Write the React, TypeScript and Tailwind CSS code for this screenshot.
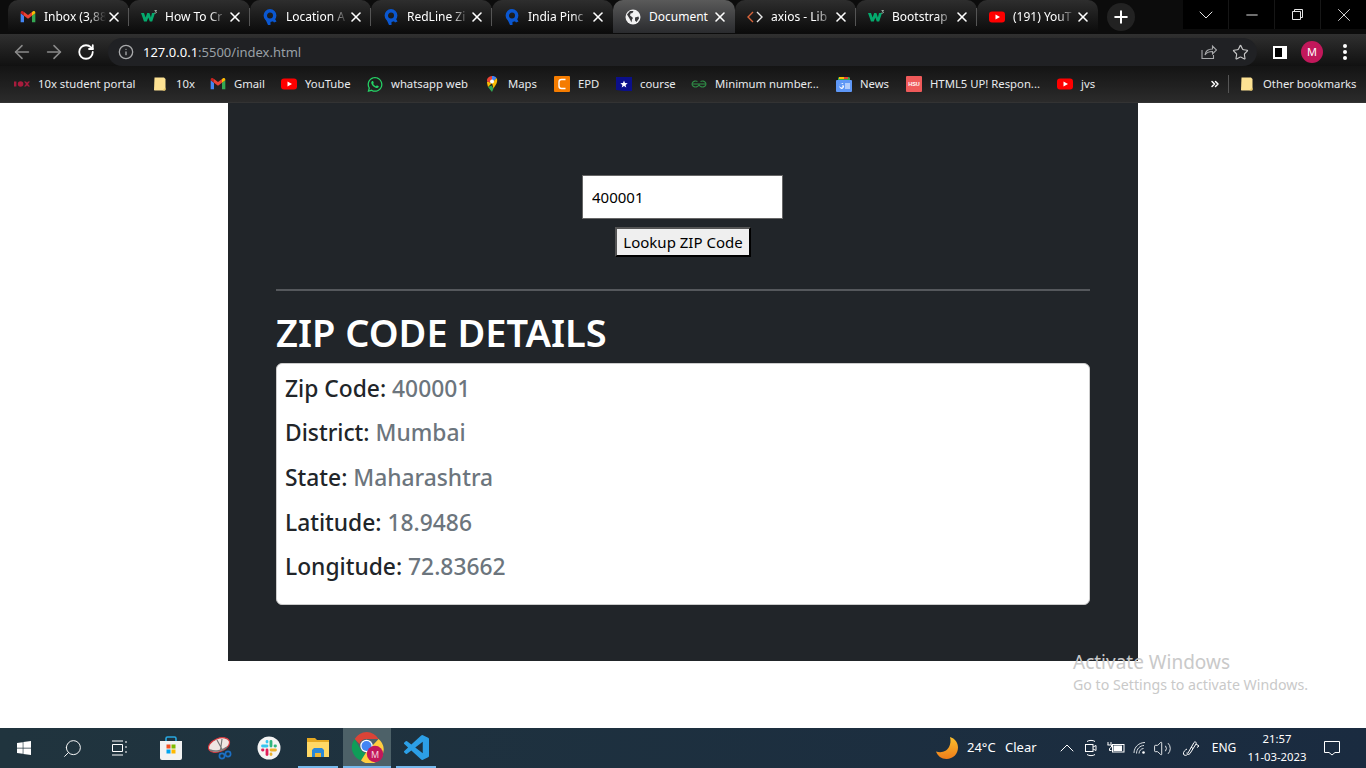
import React from 'react';
import { ArrowLeft, ArrowRight, RotateCw, Info, Star, X, Plus, ChevronDown, ChevronUp, ChevronsRight, Minus, Search, Volume2 } from 'lucide-react';
import { FaWindows, FaWhatsapp } from 'react-icons/fa';

const Gmail = ({ size = 16 }: { size?: number }) => (
  <svg width={size} height={size} viewBox="0 0 24 24">
    <path fill="#4285F4" d="M1 20h5V10L1 6.500z" />
    <path fill="#34A853" d="M18 20h5V6.500L18 10z" />
    <path fill="#EA4335" d="M6 10V4.500l6 4.500 6-4.500V10l-6 4.500z" />
    <path fill="#FBBC04" d="M18 4.500l1.500-1C21 2.500 23 3.500 23 5.500v1L18 10z" />
    <path fill="#C5221F" d="M6 4.500l-1.500-1C3 2.500 1 3.500 1 5.500v1L6 10z" />
  </svg>
);

const W3 = () => (
  <svg width="16" height="16" viewBox="0 0 16 16">
    <path fill="#04AA6D" d="M0 4h3l1.600 4.500L6.200 4h2.200l1.500 4.500L11 4h3l-2.800 8.500H8.800L7.300 8.500l-1.500 4H3z" />
    <path fill="none" stroke="#cfe8dc" strokeWidth="0.700" d="M13.500 1.500h2l-1 1c.8 0 1 .5 1 .8 0 .5-.8 1-2 .7" />
  </svg>
);

const RedLine = () => (
  <svg width="16" height="16" viewBox="0 0 16 16">
    <circle cx="8" cy="6.500" r="4.700" fill="none" stroke="#0b57d0" strokeWidth="3.400" />
    <path fill="#0b57d0" d="M3.500 10.500l2.500 5.500h2.500L8.500 12zM9.500 10.500l2.500 3 2.500-1L12.500 9z" />
  </svg>
);

const Globe = () => (
  <svg width="16" height="16" viewBox="0 0 16 16">
    <circle cx="8" cy="8" r="7.500" fill="#f1f1f1" />
    <path fill="#3a3a3c" d="M2 5.500l3-3.500h3.500l-1 2-2 .5L5 6.500l2 1.500 1 1-1 1.500-.5 3L4.500 9.500zM10 8.500l3.500-1 .5 2-2.500 3.500-1.500-1.500z" />
  </svg>
);

const CodeTag = () => (
  <svg width="16" height="16" viewBox="0 0 16 16" fill="none" strokeWidth="1.400">
    <path d="M6 3L1 8l5 5" stroke="#d9653b" />
    <path d="M10 3l5 5-5 5" stroke="#e8e8e8" />
  </svg>
);

const YouTube = () => (
  <svg width="16" height="16" viewBox="0 0 16 16">
    <rect x="0" y="2.500" width="16" height="11" rx="3" fill="#ff0000" />
    <path d="M6.500 5.500v5L11 8z" fill="#fff" />
  </svg>
);

const Folder = () => (
  <svg width="16" height="16" viewBox="0 0 16 16">
    <path fill="#fde293" d="M2.500 1.500h9.500l1.500 1.500v10.500l-.5 1h-10.500l-.5-.5z" />
    <path fill="#e8c766" d="M10.500 14.500l3-3v2.500l-.5.500z" />
  </svg>
);

const Maps = () => (
  <svg width="16" height="16" viewBox="0 0 16 16">
    <path fill="#34a853" d="M4 11l4 5 1.500-3.500-2-3z" />
    <path fill="#fbbc04" d="M3 5.500c0 2 .5 3.500 1 5.500l4-4z" />
    <path fill="#4285f4" d="M8 0c2 0 3.500.500 4.500 2L8 7z" />
    <path fill="#ea4335" d="M3.500 2.500C2.800 3.300 3 4.500 3 5.500l5 1.500V0C6 0 4.500 1 3.500 2.500z" />
    <path fill="#fbbc04" d="M12.500 2c1 1.500.8 3.500 0 5.500L9.500 12.500 8 7z" />
    <circle cx="8" cy="5.500" r="2" fill="#fff" />
  </svg>
);

const Epd = () => (
  <svg width="16" height="16" viewBox="0 0 16 16">
    <rect width="16" height="16" rx="1" fill="#f57c00" />
    <path d="M11.500 3.500H7.500a2.500 2.500 0 0 0-2.500 2.500v4a2.500 2.500 0 0 0 2.500 2.500h4" fill="none" stroke="#fff" strokeWidth="1.400" />
  </svg>
);

const Course = () => (
  <svg width="16" height="16" viewBox="0 0 16 16">
    <path fill="#0b0f8a" d="M0 1h16v14H8l-8-1z" />
    <path fill="#fff" d="M8 4.500l1 2.500 2.700.200-2.100 1.700.700 2.600L8 10l-2.300 1.500.700-2.600-2.100-1.700L7 7z" />
  </svg>
);

const Gfg = () => (
  <svg width="16" height="16" viewBox="0 0 16 16" fill="none" stroke="#2f8d46" strokeWidth="1.100">
    <path d="M1 8h14" />
    <path d="M8 8.500A3.500 3 0 1 1 6.500 5.500" />
    <path d="M8 8.500A3.500 3 0 1 0 9.500 5.500" />
  </svg>
);

const GNews = () => (
  <svg width="16" height="16" viewBox="0 0 16 16">
    <path fill="#34a853" d="M2 2l1-1h10l1 1v3H2z" />
    <path fill="#fbbc04" d="M3 1h5v2H3z" />
    <path fill="#ea4335" d="M8 1h4v2H8z" />
    <rect y="4" width="16" height="12" rx="1" fill="#5e97f6" />
    <path fill="#fff" d="M9 7.500h5v1H9zM9 9.500h5v1H9zM9 11.500h5v1H9zM6 9.500v1h1c-.2.700-.8 1-1.500 1a2 2 0 1 1 1.200-3.600l.8-.7A3 3 0 1 0 5.500 13c1.700 0 2.600-1.300 2.500-3.500z" />
  </svg>
);

const Hsu = () => (
  <svg width="16" height="16" viewBox="0 0 16 16">
    <rect width="16" height="16" rx="1" fill="#ef5a5a" />
    <text x="8" y="10" fontSize="5.500" fontWeight="700" fill="#fff" textAnchor="middle" fontFamily="Liberation Sans, sans-serif">HSU</text>
  </svg>
);

const TenX = () => (
  <svg width="16" height="16" viewBox="0 0 16 16" fill="#a81c3d">
    <rect x="0" y="5.500" width="2.400" height="5" />
    <circle cx="6.600" cy="8" r="2.800" />
    <path d="M10 5.500h2l1 1.300 1-1.300h2L14 8l2 2.500h-2l-1-1.300-1 1.300h-2L12 8z" />
  </svg>
);

const Store = () => (
  <svg width="24" height="26" viewBox="0 0 24 26">
    <path d="M7 7V3.500a1.500 1.500 0 0 1 1.500-1.500h7A1.500 1.500 0 0 1 17 3.500V7" fill="none" stroke="#29a8e0" strokeWidth="1.600" />
    <path d="M1 6h22v17a2 2 0 0 1-2 2H3a2 2 0 0 1-2-2z" fill="#f2f2f2" />
    <rect x="7.500" y="9.500" width="4" height="4" fill="#f25022" />
    <rect x="12.500" y="9.500" width="4" height="4" fill="#7fba00" />
    <rect x="7.500" y="14.500" width="4" height="4" fill="#00a4ef" />
    <rect x="12.500" y="14.500" width="4" height="4" fill="#ffb900" />
  </svg>
);

const Snip = () => (
  <svg width="26" height="24" viewBox="0 0 26 24">
    <ellipse cx="11" cy="9" rx="11" ry="6.500" transform="rotate(-22 11 9)" fill="#efe6e2" stroke="#d7393f" strokeWidth="1.200" />
    <path d="M2 14c5 2 12 1 17-3" stroke="#777" strokeWidth="1.500" fill="none" />
    <path d="M9 4l6 11M14 3l-1.500 11" stroke="#777" strokeWidth="1.200" />
    <circle cx="20" cy="18" r="2.600" fill="none" stroke="#1c6fc4" strokeWidth="1.700" />
    <circle cx="14" cy="20" r="2.600" fill="none" stroke="#1c6fc4" strokeWidth="1.700" />
  </svg>
);

const Slack = () => (
  <svg width="24" height="24" viewBox="0 0 24 24">
    <circle cx="12" cy="12" r="11.500" fill="#f4f4f4" />
    <g strokeWidth="2.800" strokeLinecap="round">
      <path d="M10 5.500v.5" stroke="#36c5f0" />
      <path d="M5.500 10h4.500" stroke="#36c5f0" />
      <path d="M18.500 10H18" stroke="#2eb67d" />
      <path d="M14 5.500V10" stroke="#2eb67d" />
      <path d="M14 18.500V18" stroke="#ecb22e" />
      <path d="M14 14h4.500" stroke="#ecb22e" />
      <path d="M5.500 14H6" stroke="#e01e5a" />
      <path d="M10 14v4.500" stroke="#e01e5a" />
    </g>
  </svg>
);

const Explorer = () => (
  <svg width="22" height="20" viewBox="0 0 22 20">
    <path fill="#e6a922" d="M0 1h8l2 2h12v4H0z" />
    <path fill="#ffd866" d="M0 5h22v15H0z" />
    <path fill="#2b88d8" d="M5 20v-7l2-2h8l2 2v7h-3v-4H8v4z" />
    <path fill="#f2b632" d="M8 16h6v4H8z" />
  </svg>
);

const Chrome = () => (
  <svg width="34" height="32" viewBox="0 0 34 32">
    <path fill="#db4437" d="M4.700 8A13.800 13.800 0 0 1 28.600 8H16.500a7.500 7.500 0 0 0-7 5z" />
    <path fill="#0f9d58" d="M4.700 8l6 10.500a7 7 0 0 0 5 3.800L11 29.500A13.800 13.800 0 0 1 4.700 8z" />
    <path fill="#ffcd40" d="M28.600 8A13.800 13.800 0 0 1 11 29.500l5-8z" />
    <circle cx="16.500" cy="15" r="6.200" fill="#fff" />
    <circle cx="16.500" cy="15" r="5" fill="#4285f4" />
    <circle cx="25" cy="23" r="8.200" fill="#c2185b" />
    <text x="25" y="26.500" fontSize="9" fill="#f3d2de" textAnchor="middle" fontFamily="Noto Sans, sans-serif">M</text>
  </svg>
);

const VsCode = () => (
  <svg width="25" height="25" viewBox="0 0 24 24">
    <path fill="#2c9fe6" d="M23.150 2.587L18.210.21a1.494 1.494 0 0 0-1.705.29l-9.460 8.630-4.120-3.128a.999.999 0 0 0-1.276.057L.327 7.261A1 1 0 0 0 .326 8.740L3.899 12 .326 15.260a1 1 0 0 0 .001 1.479L1.650 17.940a.999.999 0 0 0 1.276.057l4.120-3.128 9.460 8.630a1.492 1.492 0 0 0 1.704.29l4.942-2.377A1.500 1.500 0 0 0 24 20.060V3.939a1.500 1.500 0 0 0-.85-1.352zm-5.146 14.861L10.826 12l7.178-5.448v10.896z" />
  </svg>
);

const Moon = () => (
  <svg width="24" height="24" viewBox="0 0 24 24">
    <defs>
      <linearGradient id="moonFill" x1="0" y1="0" x2="0" y2="1">
        <stop offset="0" stopColor="#fbc02d" />
        <stop offset="1" stopColor="#ef7d1a" />
      </linearGradient>
    </defs>
    <path fill="url(#moonFill)" d="M15 1c5 1.500 8 5.500 8 10.500C23 18 18 23 11.500 23 6.500 23 2.500 20 1 15.500c6 2 11-.5 13-4.500 1.500-3 2-6.500 1-10z" />
  </svg>
);

const Meet = () => (
  <svg width="14" height="18" viewBox="0 0 14 18" fill="none" stroke="#fff" strokeWidth="1">
    <path d="M3 2.500c2-1.500 6-1.500 8 0M3 15.500c2 1.500 6 1.500 8 0" />
    <rect x="1.500" y="5.500" width="7.500" height="7" />
    <path d="M9 8l3-1.500v5L9 10" />
  </svg>
);

const Battery = () => (
  <svg width="18" height="14" viewBox="0 0 18 14" fill="none" stroke="#fff" strokeWidth="1">
    <path d="M1 1v3M4 1v3M.500 4h4v2l-2 1.500v2h2" />
    <rect x="5.500" y="3.500" width="11.500" height="7.500" />
    <rect x="6.500" y="4.500" width="8.500" height="5.500" fill="#fff" stroke="none" />
  </svg>
);

const Wifi = () => (
  <svg width="14" height="14" viewBox="0 0 14 14" fill="none" stroke="#d8dde2" strokeWidth="1">
    <path d="M1 12C1 6 6 1.500 12 1.500" />
    <path d="M3.500 12.500C3.500 8 7 4.500 11 4.500" />
    <path d="M6 12.500C6 10 8 7.500 10.500 7.500" />
    <circle cx="10.500" cy="11.500" r="1.300" fill="#fff" stroke="none" />
  </svg>
);

const Pen = () => (
  <svg width="18" height="18" viewBox="0 0 18 18" fill="none" stroke="#fff" strokeWidth="1">
    <path d="M6 14L12 3.500c1-1.500 3 0 2 1.500L8 14.500c-1 1.500-3.500 1-3-1" />
    <path d="M14 5l3 2-2 1.500M5 10c-2 1-4 3-3.500 5s3 1.500 4 .5M9 8l2 1.500" />
  </svg>
);

const ActionCenter = () => (
  <svg width="16" height="16" viewBox="0 0 16 16" fill="none" stroke="#fff" strokeWidth="1">
    <path d="M.500 1.500h15v11H11L8 15l-3-2.500H.500z" />
  </svg>
);

const Share = () => (
  <svg width="16" height="16" viewBox="0 0 16 16" fill="none" stroke="#a8a9ab" strokeWidth="1.100">
    <path d="M1 6v8.500h11.500V11" />
    <path d="M4 11c.5-4 3.500-6 7.500-6V2L15.500 6l-4 4V7.500C8.500 7.500 5.500 8.500 4 11z" />
  </svg>
);

const tabs = [
  { label: 'Inbox (3,88', icon: <Gmail />, width: 'w-[121px]', sep: true },
  { label: 'How To Cr', icon: <W3 />, width: 'w-[121px]', sep: true },
  { label: 'Location A', icon: <RedLine />, width: 'w-[121px]', sep: true },
  { label: 'RedLine Zi', icon: <RedLine />, width: 'w-[121px]', sep: true },
  { label: 'India Pinc', icon: <RedLine />, width: 'w-[121px]' },
  { label: 'Document', icon: <Globe />, width: 'w-[122px]', active: true },
  { label: 'axios - Lib', icon: <CodeTag />, width: 'w-[121px]', sep: true },
  { label: 'Bootstrap', icon: <W3 />, width: 'w-[121px]', sep: true },
  { label: '(191) YouT', icon: <YouTube />, width: 'w-[121px]' },
];

const bookmarks = [
  { label: '10x student portal', icon: <TenX />, width: 'w-[138px]' },
  { label: '10x', icon: <Folder />, width: 'w-[58px]' },
  { label: 'Gmail', icon: <Gmail />, width: 'w-[71px]' },
  { label: 'YouTube', icon: <YouTube />, width: 'w-[86px]' },
  { label: 'whatsapp web', icon: <FaWhatsapp size={17} className="text-[#25d366]" />, width: 'w-[117px]' },
  { label: 'Maps', icon: <Maps />, width: 'w-[70px]' },
  { label: 'EPD', icon: <Epd />, width: 'w-[62px]' },
  { label: 'course', icon: <Course />, width: 'w-[75px]' },
  { label: 'Minimum number...', icon: <Gfg />, width: 'w-[145px]' },
  { label: 'News', icon: <GNews />, width: 'w-[70px]' },
  { label: 'HTML5 UP! Respon...', icon: <Hsu />, width: 'w-[151px]' },
  { label: 'jvs', icon: <YouTube />, width: 'w-[40px]' },
];

const details = [
  { label: 'Zip Code:', value: '400001' },
  { label: 'District:', value: 'Mumbai' },
  { label: 'State:', value: 'Maharashtra' },
  { label: 'Latitude:', value: '18.9486' },
  { label: 'Longitude:', value: '72.83662' },
];

const Tab = ({ label, icon, width, active, sep }: { label: string; icon: React.ReactNode; width: string; active?: boolean; sep?: boolean }) => (
  <div
    className={`${width} h-[33px] shrink-0 flex items-center pl-3 rounded-t-[10px] ${
      active ? 'bg-gradient-to-b from-[#5a5a5a] to-[#2a2b2e]' : 'bg-gradient-to-b from-[#2e2e2e] to-[#0b0b0b]'
    }`}
  >
    <span className="w-4 shrink-0 flex justify-center">{icon}</span>
    <span
      className={`ml-2 w-[62px] whitespace-nowrap text-xs text-white ${
        active ? '' : '[mask-image:linear-gradient(to_right,black_72%,transparent)]'
      }`}
    >
      {label}
    </span>
    <X size={16} strokeWidth={2.4} className="ml-auto text-white" />
    <div className={`ml-[6px] w-px h-[18px] ${sep ? 'bg-[#555]' : 'bg-transparent'}`} />
  </div>
);

const TrayCell = ({ width, children }: { width: string; children: React.ReactNode }) => (
  <div className={`${width} h-full shrink-0 flex items-center justify-center`}>{children}</div>
);

export default function App() {
  return (
    <div className="w-[1366px] h-[768px] overflow-hidden flex flex-col font-['Noto_Sans',sans-serif]">
      {/* tab strip */}
      <div className="h-[34px] shrink-0 flex items-start bg-[#0c0c0c] pl-2">
        {tabs.map((t) => (
          <Tab key={t.label} {...t} />
        ))}
        <div className="ml-[9px] mt-[3px] w-7 h-7 rounded-full bg-[#222] flex items-center justify-center">
          <Plus size={20} strokeWidth={2.4} className="text-white" />
        </div>
        <div className="ml-auto w-[183px] h-[29px] bg-black flex text-[#e4e4e4]">
          <div className="flex-1 flex items-center justify-center border-r border-[#161616]"><ChevronDown size={24} strokeWidth={1} /></div>
          <div className="flex-1 flex items-center justify-center border-r border-[#161616]"><Minus size={18} strokeWidth={1.300} /></div>
          <div className="flex-1 flex items-center justify-center border-r border-[#161616]">
            <svg width="11" height="11" viewBox="0 0 11 11" fill="none" stroke="#e4e4e4"><path d="M.500 2.500h8v8h-8zM2.500 2.500v-2h8v8h-2" /></svg>
          </div>
          <div className="flex-1 flex items-center justify-center"><X size={22} strokeWidth={1} /></div>
        </div>
      </div>

      {/* toolbar */}
      <div className="h-[32px] shrink-0 flex items-center bg-gradient-to-b from-[#303030] to-[#111] pl-[11px] pt-[4px]">
        <ArrowLeft size={22} strokeWidth={1.700} className="text-[#8a8a8a]" />
        <ArrowRight size={22} strokeWidth={1.700} className="ml-[10px] text-[#8a8a8a]" />
        <RotateCw size={18} strokeWidth={2.4} className="ml-[12px] text-white" />
        <div className="ml-[13px] w-[1149px] h-[28px] rounded-full bg-[#202124] flex items-center pl-[10px] pr-[8px]">
          <Info size={16} className="text-[#a8a9ab]" />
          <span className="ml-[9px] mt-[1px] text-[13px] text-white">
            127.0.0.1<span className="text-[#9aa0a6]">:5500/index.html</span>
          </span>
          <span className="ml-auto"><Share /></span>
          <Star size={17} strokeWidth={1.600} className="ml-[15px] text-[#c8c8c8]" />
        </div>
        <div className="ml-[16px] w-[14px] h-[13px] border-[2px] border-white border-r-[5px] bg-black" />
        <div className="ml-[14px] w-[22px] h-[22px] rounded-full bg-[#c2185b] flex items-center justify-center text-[11px] text-white">M</div>
        <div className="ml-[20px] flex flex-col gap-[2px]">
          <span className="w-1 h-1 rounded-full bg-white" />
          <span className="w-1 h-1 rounded-full bg-white" />
          <span className="w-1 h-1 rounded-full bg-white" />
        </div>
      </div>

      {/* bookmarks bar */}
      <div className="h-[37px] shrink-0 flex items-center bg-gradient-to-b from-[#141414] to-[#2b2b2b] border-b border-[#333] pl-[14px] text-[11.300px] text-[#e8eaed]">
        {bookmarks.map((b) => (
          <div key={b.label} className={`${b.width} shrink-0 flex items-center gap-2 whitespace-nowrap`}>
            <span className="w-4 shrink-0 flex justify-center">{b.icon}</span>
            <span>{b.label}</span>
          </div>
        ))}
        <ChevronsRight size={12} strokeWidth={3} className="ml-[112px] text-white" />
        <div className="ml-[7px] w-px h-[18px] bg-[#555]" />
        <span className="ml-[10px] w-4 flex justify-center"><Folder /></span>
        <span className="ml-[8px] whitespace-nowrap">Other bookmarks</span>
      </div>

      {/* page */}
      <div className="flex-1 min-h-0 bg-white flex justify-center relative">
        <div className="w-[910px] h-[558px] bg-[#212529] px-12 pt-[72px]">
          <div className="flex flex-col items-center">
            <input
              readOnly
              defaultValue="400001"
              className="w-[201px] h-[44px] ml-[-1px] bg-white border border-[#666] px-[9px] text-[15px] text-black outline-none"
            />
            <button className="mt-2 w-[136px] h-[30px] bg-[#efefef] border-2 border-t-[#555] border-l-[#555] border-r-black border-b-black text-[15px] text-black">
              Lookup ZIP Code
            </button>
          </div>
          <div className="mt-[32px] h-[2px] bg-[#55585c]" />
          <h1 className="mt-[12px] mb-[2px] h-[58px] text-[38px] leading-[58px] font-semibold text-white">ZIP CODE DETAILS</h1>
          <div className="h-[242px] bg-white rounded-md border border-[#ccc] pl-2 pr-2 pt-[6.500px]">
            {details.map((d) => (
              <div key={d.label} className="h-[44.700px] text-[22.800px] leading-[36px] font-medium text-[#212529]">
                {d.label} <span className="text-[#6c757d]">{d.value}</span>
              </div>
            ))}
          </div>
        </div>
        <div className="absolute left-[1073px] top-[546px] text-[#c9c9c9]">
          <div className="text-[19px] leading-[26px]">Activate Windows</div>
          <div className="text-[14.200px] leading-[20px]">Go to Settings to activate Windows.</div>
        </div>
      </div>

      {/* taskbar */}
      <div className="h-[40px] shrink-0 flex items-center bg-gradient-to-r from-[#20343e] to-[#1a2b40] text-white pr-[17px]">
        <TrayCell width="w-[48px]"><FaWindows size={16} /></TrayCell>
        <TrayCell width="w-[48px]"><Search size={21} strokeWidth={1.100} className="-scale-x-100" /></TrayCell>
        <TrayCell width="w-[48px]">
          <svg width="16" height="16" viewBox="0 0 16 16" fill="none" stroke="#fff" strokeWidth="1"><path d="M0 1h11M0 15h11M.500 4.500h10v7H.500zM14 1v2M14 6v2M14 11v2" /></svg>
        </TrayCell>
        <TrayCell width="w-[54px]"><Store /></TrayCell>
        <TrayCell width="w-[46px]"><Snip /></TrayCell>
        <TrayCell width="w-[50px]"><Slack /></TrayCell>
        <div className="ml-1 w-10 h-full shrink-0 flex items-center justify-center border-b-2 border-[#76b9ed]"><Explorer /></div>
        <div className="ml-[5px] w-12 h-full shrink-0 flex items-center justify-center bg-[#4d6168] border-b-2 border-[#76b9ed]"><Chrome /></div>
        <div className="ml-[5px] w-10 h-full shrink-0 flex items-center justify-center border-b-2 border-[#76b9ed]"><VsCode /></div>

        <div className="ml-auto h-full flex items-center">
          <TrayCell width="w-[26px]"><Moon /></TrayCell>
          <span className="ml-[7px] w-[38px] text-[13px]">24°C</span>
          <span className="w-[50px] text-[13px]">Clear</span>
          <TrayCell width="w-[24px]"><ChevronUp size={24} strokeWidth={1} /></TrayCell>
          <TrayCell width="w-[24px]"><Meet /></TrayCell>
          <TrayCell width="w-[26px]"><Battery /></TrayCell>
          <TrayCell width="w-[22px]"><Wifi /></TrayCell>
          <TrayCell width="w-[22px]"><Volume2 size={19} strokeWidth={1.100} /></TrayCell>
          <TrayCell width="w-[36px]"><Pen /></TrayCell>
          <TrayCell width="w-[30px]"><span className="text-xs">ENG</span></TrayCell>
          <div className="w-[76px] flex flex-col items-center text-[11.300px] leading-[18px]">
            <span>21:57</span>
            <span>11-03-2023</span>
          </div>
          <TrayCell width="w-[34px]"><ActionCenter /></TrayCell>
        </div>
      </div>
    </div>
  );
}
